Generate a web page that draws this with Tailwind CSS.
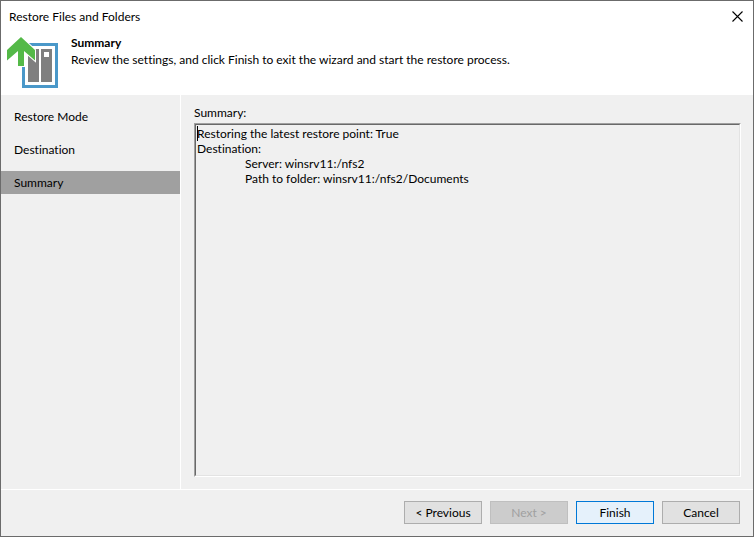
<!DOCTYPE html>
<html lang="en">
<head>
    <meta charset="UTF-8">
    <meta name="viewport" content="width=device-width, initial-scale=1.0">
    <title>Restore Files and Folders</title>
    <script src="https://cdn.jsdelivr.net/npm/@tailwindcss/browser@4"></script>
</head>
<body class="bg-[#f0f0f0]">

    <div class="flex flex-col min-h-screen border border-[#6b6b6b] bg-[#f0f0f0] text-black text-[12px] leading-[15px] font-['Lato','Open_Sans',sans-serif] [font-variant-ligatures:none]">

        <!-- Title bar -->
        <div class="flex items-center justify-between bg-white h-[30px] pl-2 pr-[10px]">
            <h1>Restore Files and Folders</h1>
            <button type="button" aria-label="Close" class="p-0">
                <svg class="block w-[11px] h-[11px]" viewBox="0 0 11 11" fill="none" stroke="#000" stroke-width="1.1">
                    <path d="M0.5 0.5l10 10M10.5 0.5l-10 10"/>
                </svg>
            </button>
        </div>

        <!-- Step header -->
        <header class="flex bg-white h-16 pl-[6px] pt-[4px] gap-3">
            <svg class="block shrink-0 w-[52px] h-[54px]" viewBox="0 0 52 54">
                <rect x="16.5" y="9.5" width="33" height="42" fill="#fff" stroke="#4a98c9" stroke-width="3"/>
                <rect x="21" y="14" width="11" height="33" fill="#7f7f7f"/>
                <rect x="34" y="14" width="11" height="33" fill="#7f7f7f"/>
                <rect x="37" y="17" width="5" height="5" fill="#fff"/>
                <path d="M14 2L28 15V25.5L17 16V31H11V16L0 25.5V15Z" fill="#54b948" stroke="#fff" stroke-width="2" paint-order="stroke"/>
            </svg>
            <div class="flex flex-col gap-[2px]">
                <h2 class="font-bold">Summary</h2>
                <p>Review the settings, and click Finish to exit the wizard and start the restore process.</p>
            </div>
        </header>

        <div class="flex grow">
            <!-- Wizard steps -->
            <nav class="flex flex-col gap-[10px] w-[180px] shrink-0 border-r border-white pt-[10px]">
                <a href="#" class="px-[13px] py-1">Restore Mode</a>
                <a href="#" class="px-[13px] py-1">Destination</a>
                <a href="#" aria-current="step" class="px-[13px] py-1 bg-[#a0a0a0]">Summary</a>
            </nav>

            <main class="flex flex-col grow gap-[3px] pl-[13px] pr-3 pt-[10px] pb-3">
                <label for="summary">Summary:</label>
                <div class="relative flex grow border border-t-[#a0a0a0] border-l-[#a0a0a0] border-r-white border-b-white">
                    <textarea id="summary" readonly class="grow resize-none outline-none px-px py-px border border-t-[#696969] border-l-[#696969] border-r-[#e3e3e3] border-b-[#e3e3e3] [tab-size:48px] caret-transparent">Restoring the latest restore point: True
Destination:
&#9;Server: winsrv11:/nfs2
&#9;Path to folder: winsrv11:/nfs2/Documents</textarea>
                    <span class="absolute left-[2px] top-[2px] w-px h-[15px] bg-black"></span>
                </div>
            </main>
        </div>

        <!-- Buttons -->
        <footer class="flex justify-end gap-2 border-t border-white pr-[13px] pt-[11px] pb-3">
            <button type="button" class="w-[78px] h-[23px] border border-[#adadad] bg-[#e1e1e1]">&lt; Previous</button>
            <button type="button" disabled class="w-[78px] h-[23px] border border-[#bfbfbf] bg-[#cccccc] text-[#a0a0a0]">Next &gt;</button>
            <button type="button" class="w-[78px] h-[23px] border border-[#0078d7] bg-[#e5f1fb]">Finish</button>
            <button type="button" class="w-[78px] h-[23px] border border-[#adadad] bg-[#e1e1e1]">Cancel</button>
        </footer>
    </div>

</body>
</html>
